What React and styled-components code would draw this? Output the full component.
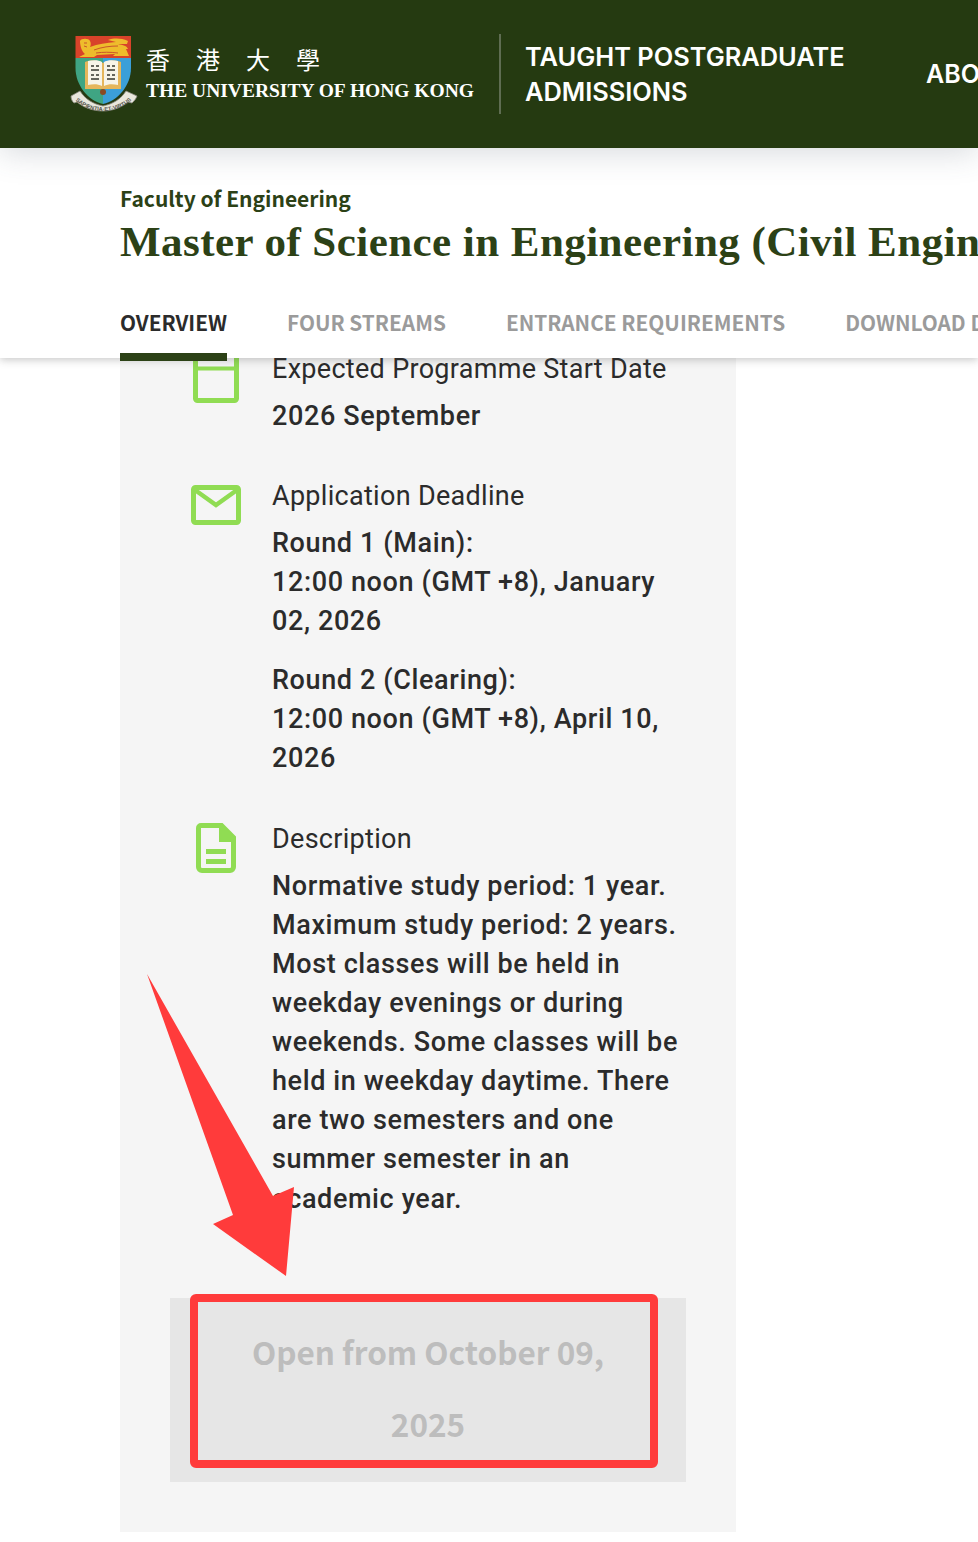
import React from "react";
import styled, { createGlobalStyle } from "styled-components";

const HEADING_FONT = '"Noto Sans CJK SC", "Noto Sans", sans-serif';
const BODY_FONT = 'Roboto, "Liberation Sans", sans-serif';

const App = () => {
  return (
    <Page>
      <GlobalStyle />
      <Header>
        <Crest />
        <Brand>
          <BrandChinese>香港大學</BrandChinese>
          <BrandEnglish>THE UNIVERSITY OF HONG KONG</BrandEnglish>
        </Brand>
        <Divider />
        <SiteName>
          TAUGHT POSTGRADUATE
          <br />
          ADMISSIONS
        </SiteName>
        <HeaderLink>ABOUT</HeaderLink>
      </Header>

      <SubHeader>
        <Faculty>Faculty of Engineering</Faculty>
        <Title>Master of Science in Engineering (Civil Engineering)</Title>
        <Tabs>
          <Tab $active>OVERVIEW</Tab>
          <Tab>FOUR STREAMS</Tab>
          <Tab>ENTRANCE REQUIREMENTS</Tab>
          <Tab>DOWNLOAD DOCUMENTS</Tab>
        </Tabs>
      </SubHeader>

      <Panel>
        <Row $first>
          <IconCell $top={3.5}>
            <CalendarIcon />
          </IconCell>
          <div>
            <Label>Expected Programme Start Date</Label>
            <Value>2026 September</Value>
          </div>
        </Row>

        <Row>
          <IconCell $top={8.5}>
            <MailIcon />
          </IconCell>
          <div>
            <Label>Application Deadline</Label>
            <Value>
              Round 1 (Main):
              <br />
              12:00 noon (GMT +8), January 02, 2026
            </Value>
            <Value $spaced>
              Round 2 (Clearing):
              <br />
              12:00 noon (GMT +8), April 10, 2026
            </Value>
          </div>
        </Row>

        <Row>
          <IconCell $top={3.5}>
            <DocIcon />
          </IconCell>
          <div>
            <Label>Description</Label>
            <Value>
              Normative study period: 1 year. Maximum study period: 2 years.
              Most classes will be held in weekday evenings or during weekends.
              Some classes will be held in weekday daytime. There are two
              semesters and one summer semester in an academic year.
            </Value>
          </div>
        </Row>

        <ApplyButton>
          Open from October 09, 2025
          <Highlight />
        </ApplyButton>
      </Panel>

      <Arrow viewBox="0 0 150 304">
        <polygon
          points="0,0 86,241 66,250 139,302 147,213 126,222"
          fill="#ff3b3b"
        />
      </Arrow>
    </Page>
  );
};

const Crest = () => (
  <CrestSvg viewBox="0 0 68 78">
    <path d="M5.5 1h55.5v22H5.5z" fill="#d8432a" />
    <path d="M5.5 23h27.5v46C18 66 5.5 50 5.5 33z" fill="#3fa583" />
    <path d="M33 23h28v10c0 17-13 33-28 36z" fill="#3b9fd8" />
    <path
      d="M10 6c1-3 9-3 10 0 1 2 1 4 0 6 8-3 16-4 26-5l-8-2c6-2 13-2 20 1l-1 3-9 0c5 1 9 2 10 5l-2 0 3 7H43l2-2-18 1-3 2H9l6-3c-3-2-5-8-5-13z"
      fill="#eebc2c"
    />
    <path
      d="M14 8h3M14 11l3 1M24 15c8-3 16-4 24-4M26 18c7-1 14-1 22 0"
      stroke="#c9562a"
      strokeWidth="1"
      fill="none"
    />
    <path d="M15 27c6-2 13-2 18 1 5-3 12-3 18-1v27H15z" fill="#e5b65b" />
    <path d="M18 26c5-1 11-1 14 1v24c-4-2-9-2-14-1z" fill="#f7f4e8" />
    <path d="M34 27c3-2 9-2 14-1v24c-5-1-10-1-14 1z" fill="#f7f4e8" />
    <path
      d="M21 31h3M26 31h3M21 35h8M21 40h3M26 40h3M21 44h8M37 31h3M42 31h3M37 35h8M37 40h3M42 40h3M37 44h8"
      stroke="#66665c"
      strokeWidth="2.2"
    />
    <circle cx="33" cy="57" r="3" fill="#8a4a22" />
    <path
      d="M1 61c3-2 6-3 9-5 5 8 13 13 23 15 10-2 18-7 23-15l11 5c-1 3-3 5-5 7l-4-1c-6 5-15 9-25 9-11 0-20-4-26-9l-3 1c-2-2-3-4-3-7z"
      fill="#e9e7dc"
      stroke="#8d8c82"
      strokeWidth="0.8"
    />
    <path id="crest-motto" d="M4 64c8 8 18 12 29 12s22-4 30-12" fill="none" />
    <MottoText>
      <textPath href="#crest-motto" startOffset="50%" textAnchor="middle">
        SAPIENTIA·ET·VIRTUS
      </textPath>
    </MottoText>
  </CrestSvg>
);

const CalendarIcon = () => (
  <svg width="46" height="50" viewBox="0 0 46 50">
    <rect
      x="2.5"
      y="2.5"
      width="41"
      height="45"
      rx="2"
      fill="none"
      stroke="#90dc53"
      strokeWidth="5"
    />
    <path d="M2 15.5h42" stroke="#90dc53" strokeWidth="4" />
  </svg>
);

const MailIcon = () => (
  <svg width="50" height="40" viewBox="0 0 50 40">
    <rect
      x="2.5"
      y="2.5"
      width="45"
      height="35"
      rx="2"
      fill="none"
      stroke="#90dc53"
      strokeWidth="5"
    />
    <path d="M4 5l21 15L46 5" fill="none" stroke="#90dc53" strokeWidth="4.5" />
  </svg>
);

const DocIcon = () => (
  <svg width="40" height="50" viewBox="0 0 40 50">
    <path
      d="M5 2.5h20.5l12 12V44a3.5 3.5 0 0 1-3.5 3.5H6A3.5 3.5 0 0 1 2.5 44V5A2.5 2.5 0 0 1 5 2.5z"
      fill="none"
      stroke="#90dc53"
      strokeWidth="5"
    />
    <path d="M23 2h3l13 13v4H23z" fill="#90dc53" />
    <path d="M10 26h20v5H10zM10 36h20v5H10z" fill="#90dc53" />
  </svg>
);

const GlobalStyle = createGlobalStyle`
  html, body {
    margin: 0;
    background: #fff;
  }
`;

const Page = styled.div`
  position: relative;
  width: 978px;
  height: 1542px;
  overflow: hidden;
  background: #fff;
  font-family: ${BODY_FONT};
`;

const Header = styled.header`
  position: relative;
  z-index: 3;
  display: flex;
  align-items: center;
  height: 148px;
  padding-left: 70px;
  background: #253a11;
  color: #fff;
  white-space: nowrap;
  box-shadow: 0 4px 30px rgba(70, 80, 100, 0.22);
`;

const CrestSvg = styled.svg`
  flex: none;
  width: 68px;
  height: 78px;
  margin-right: 8px;
`;

const MottoText = styled.text`
  font-family: "Liberation Sans", sans-serif;
  font-size: 5.6px;
  font-weight: 700;
  fill: #55544c;
`;

const Brand = styled.div`
  flex: none;
  width: 327px;
  margin-right: 26px;
`;

const BrandChinese = styled.div`
  font-family: "Noto Sans CJK TC", sans-serif;
  font-size: 24px;
  line-height: 30px;
  letter-spacing: 26px;
`;

const BrandEnglish = styled.div`
  margin-top: 4px;
  font-family: "Liberation Serif", serif;
  font-size: 19.5px;
  font-weight: 700;
  line-height: 26px;
`;

const Divider = styled.div`
  flex: none;
  width: 2px;
  height: 80px;
  margin-right: 24px;
  background: #5f6d52;
`;

const SiteName = styled.div`
  flex: none;
  width: 401px;
  font-size: 25.4px;
  font-weight: 600;
  line-height: 35px;
  font-family: Inter, ${BODY_FONT};
`;

const HeaderLink = styled.div`
  flex: none;
  font-size: 25px;
  font-weight: 600;
  font-family: Inter, ${BODY_FONT};
`;

const SubHeader = styled.section`
  position: relative;
  z-index: 2;
  height: 210px;
  box-sizing: border-box;
  padding: 35px 0 0 120px;
  background: #fff;
  white-space: nowrap;
  box-shadow: 0 2px 8px rgba(60, 60, 60, 0.28);
`;

const Faculty = styled.div`
  font-family: ${HEADING_FONT};
  font-size: 21px;
  font-weight: 700;
  line-height: 30px;
  color: #2c4116;
`;

const Title = styled.h1`
  margin: 3px 0 0;
  font-family: "Liberation Serif", serif;
  font-size: 43px;
  font-weight: 700;
  line-height: 52px;
  letter-spacing: 0.45px;
  color: #2c4116;
`;

const Tabs = styled.nav`
  display: flex;
  gap: 60px;
  margin-top: 39px;
`;

const Tab = styled.div`
  position: relative;
  padding-bottom: 21px;
  font-family: ${HEADING_FONT};
  font-size: 20.8px;
  font-weight: 700;
  line-height: 30px;
  color: ${({ $active }) => ($active ? "#2b2b2b" : "#9b9b9b")};

  &::after {
    content: "";
    display: ${({ $active }) => ($active ? "block" : "none")};
    position: absolute;
    left: 0;
    right: 0;
    bottom: -3px;
    height: 8px;
    background: #2c4116;
  }
`;

const Panel = styled.main`
  display: flow-root;
  width: 616px;
  height: 1174px;
  box-sizing: border-box;
  margin-left: 120px;
  padding: 0 50px;
  background: #f5f5f5;
`;

const Row = styled.div`
  display: grid;
  grid-template-columns: 92px 1fr;
  column-gap: 10px;
  margin-top: ${({ $first }) => ($first ? "-8.5px" : "41.3px")};
`;

const IconCell = styled.div`
  display: flex;
  justify-content: center;
  align-items: flex-start;
  padding-top: ${({ $top }) => $top}px;
`;

const Label = styled.div`
  margin-bottom: 8px;
  font-size: 27px;
  font-weight: 400;
  line-height: 39.1px;
  letter-spacing: 0.3px;
  color: #2b2b2b;
`;

const Value = styled.div`
  margin-top: ${({ $spaced }) => ($spaced ? "19.8px" : "0")};
  font-size: 27px;
  font-weight: 500;
  line-height: 39.1px;
  letter-spacing: 0.62px;
  color: #2b2b2b;
`;

const ApplyButton = styled.div`
  position: relative;
  box-sizing: border-box;
  height: 184px;
  margin-top: 79px;
  padding: 17px 70px 0;
  background: #e6e6e6;
  font-family: ${HEADING_FONT};
  font-size: 31.5px;
  font-weight: 700;
  line-height: 72px;
  text-align: center;
  color: #bdbdbd;
`;

const Highlight = styled.div`
  position: absolute;
  top: -4px;
  left: 20px;
  right: 28px;
  bottom: 14px;
  border: 8px solid #ff3b3b;
  border-radius: 6px;
`;

const Arrow = styled.svg`
  position: absolute;
  top: 974px;
  left: 147px;
  width: 150px;
  height: 304px;
`;

export default App;
